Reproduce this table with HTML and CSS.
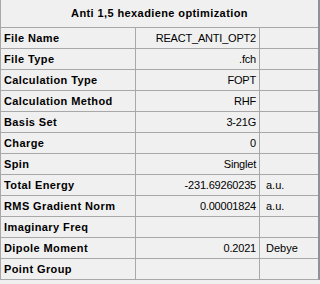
FILE: index.html
```html
<!DOCTYPE html>
<html>
<head>
	<title>Summary</title>
	<meta charset="utf-8">
	<link rel="stylesheet" href="styles.css">
</head>
<body>
	<div class="summary">
		<div class="title">Anti 1,5 hexadiene optimization</div>

		<div class="key">File Name</div>
		<div class="val">REACT_ANTI_OPT2</div>
		<div class="unit"></div>

		<div class="key">File Type</div>
		<div class="val">.fch</div>
		<div class="unit"></div>

		<div class="key">Calculation Type</div>
		<div class="val">FOPT</div>
		<div class="unit"></div>

		<div class="key">Calculation Method</div>
		<div class="val">RHF</div>
		<div class="unit"></div>

		<div class="key">Basis Set</div>
		<div class="val">3-21G</div>
		<div class="unit"></div>

		<div class="key">Charge</div>
		<div class="val">0</div>
		<div class="unit"></div>

		<div class="key">Spin</div>
		<div class="val">Singlet</div>
		<div class="unit"></div>

		<div class="key">Total Energy</div>
		<div class="val">-231.69260235</div>
		<div class="unit">a.u.</div>

		<div class="key">RMS Gradient Norm</div>
		<div class="val">0.00001824</div>
		<div class="unit">a.u.</div>

		<div class="key">Imaginary Freq</div>
		<div class="val"></div>
		<div class="unit"></div>

		<div class="key">Dipole Moment</div>
		<div class="val">0.2021</div>
		<div class="unit">Debye</div>

		<div class="key">Point Group</div>
		<div class="val"></div>
		<div class="unit"></div>
	</div>
</body>
</html>
```

FILE: styles.css
```css
*, *:before, *:after {
	box-sizing: border-box;
}

html, body {
	margin: 0;
	height: 100%;
	background: #f0f0f0;
}

body {
	font-family: 'Liberation Sans', Arial, sans-serif;
	font-size: 11px;
	color: #000;
}

/* grid lines come from the background showing through the 1px gaps */
.summary {
	display: grid;
	grid-template-columns: 134px 123px 58px;
	grid-template-rows: 27px repeat(12, 20px);
	gap: 1px;
	width: 320px;
	background: #a8a8a8;
	border-left: 1px solid #a8a8a8;
	border-right: 2px solid #8e9296;
	border-bottom: 1px solid #a8a8a8;
}

.summary > div {
	background: #f0f0f0;
	line-height: 20px;
	white-space: nowrap;
	overflow: hidden;
}

.summary > .title {
	grid-column: 1 / 4;
	line-height: 27px;
	text-align: center;
	font-weight: bold;
	letter-spacing: 0.4px;
}

.key {
	padding-left: 3px;
	font-weight: bold;
	letter-spacing: 0.4px;
}

.val {
	text-align: right;
	padding-right: 3px;
	letter-spacing: -0.2px;
}

.unit {
	padding-left: 6px;
}
```
